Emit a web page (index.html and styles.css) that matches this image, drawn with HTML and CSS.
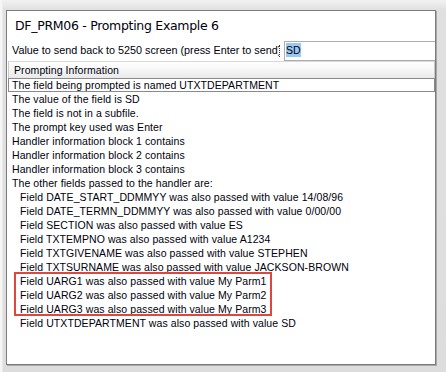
FILE: index.html
```html
<!DOCTYPE html>
<html>
<head>
<meta charset="utf-8">
<link rel="stylesheet" href="styles.css">
</head>
<body>
<div class="window">
  <div class="title">DF_PRM06 - Prompting Example 6</div>
  <div class="valuerow">
    <div class="label"><span class="labelclip">Value to send back to 5250 screen (press Enter to send)</span></div>
    <div class="input"><span class="sel">SD</span></div>
  </div>
  <div class="list">
    <div class="header">Prompting Information</div>
    <div class="item focus">The field being prompted is named UTXTDEPARTMENT</div>
    <div class="item">The value of the field is SD</div>
    <div class="item">The field is not in a subfile.</div>
    <div class="item">The prompt key used was Enter</div>
    <div class="item">Handler information block 1 contains</div>
    <div class="item">Handler information block 2 contains</div>
    <div class="item">Handler information block 3 contains</div>
    <div class="item">The other fields passed to the handler are:</div>
    <div class="item sub">Field DATE_START_DDMMYY was also passed with value 14/08/96</div>
    <div class="item sub">Field DATE_TERMN_DDMMYY was also passed with value 0/00/00</div>
    <div class="item sub">Field SECTION was also passed with value ES</div>
    <div class="item sub">Field TXTEMPNO was also passed with value A1234</div>
    <div class="item sub">Field TXTGIVENAME was also passed with value STEPHEN</div>
    <div class="item sub">Field TXTSURNAME was also passed with value JACKSON-BROWN</div>
    <div class="highlight">
      <div class="item sub">Field UARG1 was also passed with value My Parm1</div>
      <div class="item sub">Field UARG2 was also passed with value My Parm2</div>
      <div class="item sub">Field UARG3 was also passed with value My Parm3</div>
    </div>
    <div class="item sub">Field UTXTDEPARTMENT was also passed with value SD</div>
  </div>
</div>
</body>
</html>
```

FILE: styles.css
```css
html, body {
  margin: 0;
  padding: 0;
}
body {
  width: 446px;
  height: 372px;
  background:
    linear-gradient(to right, #f6f6f6 0px, #f6f6f6 2px, rgba(255,255,255,0) 3px),
    linear-gradient(to bottom, #f2f2f2 0px, #e0e0e0 10px, #dddddd 100%);
  font-family: "Liberation Sans", Arial, sans-serif;
  color: #00000c;
  overflow: hidden;
  box-sizing: border-box;
  padding: 10px 10px 0 6px;
}
.window {
  height: 355px;
  box-sizing: border-box;
  background: #fff;
  border: 1px solid #7c7c7c;
  box-shadow: 1px 1px 0 #a8a8a8;
  display: flex;
  flex-direction: column;
}
.title {
  height: 29px;
  padding-left: 8px;
  padding-top: 1px;
  box-sizing: border-box;
  font-family: "DejaVu Sans", sans-serif;
  font-size: 12.5px;
  letter-spacing: -0.3px;
  line-height: 28px;
}
.valuerow {
  display: flex;
  height: 21px;
}
.label {
  width: 277px;
  flex: none;
  box-sizing: border-box;
  padding-left: 5px;
  padding-top: 5px;
}
.labelclip {
  display: block;
  width: 267px;
  height: 12px;
  overflow: hidden;
  white-space: nowrap;
  font-size: 10.8px;
  line-height: 11px;
  border-right: 1px dotted #333;
}
.input {
  flex: 1;
  margin-top: 1px;
  height: 20px;
  box-sizing: border-box;
  border: 1px solid #abadb3;
  border-right: none;
  padding: 1px 0 0 1px;
  font-size: 10.5px;
}
.sel {
  display: inline-block;
  height: 14px;
  line-height: 15px;
  padding: 0;
  background: #99c9ef;
}
.list {
  margin: 0 0 0 1px;
  display: flex;
  flex-direction: column;
  font-size: 10.5px;
  letter-spacing: 0.08px;
}
.header {
  height: 17px;
  line-height: 17px;
  padding-left: 5px;
  background: linear-gradient(to bottom, #ffffff 0%, #f7f7f7 45%, #e9e9e9 100%);
  border: 1px solid #c9c9c9;
  border-bottom: none;
  border-top-color: #d8d8d8;
  box-sizing: border-box;
}
.item {
  height: 14px;
  line-height: 15px;
  padding-left: 4px;
  white-space: nowrap;
}
.item.sub {
  padding-left: 12px;
}
.item.focus {
  border: 1px solid #8a8a8a;
  line-height: 13px;
  padding-left: 3px;
  box-sizing: border-box;
}
.highlight {
  position: relative;
}
.highlight::after {
  content: "";
  position: absolute;
  top: -2px;
  bottom: 0;
  left: 6px;
  width: 258px;
  border: 2px solid #e0463e;
  box-sizing: border-box;
}
```
